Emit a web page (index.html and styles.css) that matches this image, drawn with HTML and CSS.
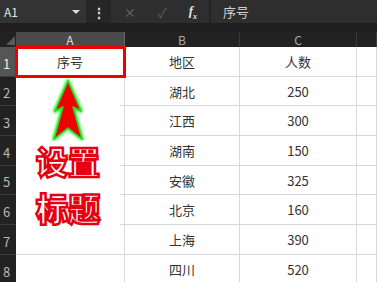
FILE: index.html
```html
<!DOCTYPE html>
<html lang="zh">

<head>
    <meta charset="UTF-8">
    <meta name="viewport" content="width=device-width, initial-scale=1.0">
    <title>设置标题</title>
    <link rel="stylesheet" href="styles.css">
</head>

<body>
    <div class="formula-bar">
        <div class="name-box">
            <span>A1</span>
            <span class="caret"></span>
        </div>
        <div class="dots">&#8942;</div>
        <div class="actions">
            <span class="icon cancel">&#10005;</span>
            <span class="icon confirm">&#10003;</span>
            <span class="icon fx">f<sub>x</sub></span>
        </div>
        <div class="formula">序号</div>
    </div>

    <div class="sheet">
        <div class="corner"><span class="tri"></span></div>
        <div class="col-head active">A</div>
        <div class="col-head">B</div>
        <div class="col-head">C</div>
        <div class="col-head"></div>

        <div class="row-head active">1</div>
        <div class="cell selected">序号</div>
        <div class="cell">地区</div>
        <div class="cell">人数</div>
        <div class="cell"></div>

        <div class="row-head">2</div>
        <div class="cell"></div>
        <div class="cell">湖北</div>
        <div class="cell">250</div>
        <div class="cell"></div>

        <div class="row-head">3</div>
        <div class="cell"></div>
        <div class="cell">江西</div>
        <div class="cell">300</div>
        <div class="cell"></div>

        <div class="row-head">4</div>
        <div class="cell"></div>
        <div class="cell">湖南</div>
        <div class="cell">150</div>
        <div class="cell"></div>

        <div class="row-head">5</div>
        <div class="cell"></div>
        <div class="cell">安徽</div>
        <div class="cell">325</div>
        <div class="cell"></div>

        <div class="row-head">6</div>
        <div class="cell"></div>
        <div class="cell">北京</div>
        <div class="cell">160</div>
        <div class="cell"></div>

        <div class="row-head">7</div>
        <div class="cell"></div>
        <div class="cell">上海</div>
        <div class="cell">390</div>
        <div class="cell"></div>

        <div class="row-head">8</div>
        <div class="cell"></div>
        <div class="cell">四川</div>
        <div class="cell">520</div>
        <div class="cell"></div>

        <div class="annotation">
            <svg class="arrow" width="104" height="64" viewBox="0 0 104 64">
                <defs>
                    <filter id="glow" x="-50%" y="-50%" width="200%" height="200%">
                        <feGaussianBlur stdDeviation="1.2" />
                    </filter>
                </defs>
                <path d="M52 4 L65 34 L57 30 L66 62 L52 51 L38 62 L47 30 L39 34 Z" fill="none" stroke="#3cf03c" stroke-width="4" stroke-linejoin="round" filter="url(#glow)" />
                <path d="M52 4 L65 34 L57 30 L66 62 L52 51 L38 62 L47 30 L39 34 Z" fill="#f00000" stroke="#27d827" stroke-width="1.5" stroke-linejoin="round" />
            </svg>
            <div class="note">设置<br>标题</div>
        </div>
    </div>
</body>

</html>
```

FILE: styles.css
```css
body {
    margin: 0;
    height: 100vh;
    overflow: hidden;
    background-color: #1f1f1f;
    font-family: "Noto Sans CJK SC", "Liberation Sans", sans-serif;
}

.formula-bar {
    display: flex;
    height: 23px;
    background-color: #2e2e2e;
    color: #e6e6e6;
    font-size: 12px;
}

.name-box {
    width: 86px;
    display: flex;
    align-items: center;
    justify-content: space-between;
    padding: 0 6px 0 4px;
    box-sizing: border-box;
    background-color: #333;
}

.caret {
    width: 0;
    height: 0;
    border-left: 4px solid transparent;
    border-right: 4px solid transparent;
    border-top: 4px solid #ddd;
}

.dots {
    width: 25px;
    display: flex;
    align-items: center;
    justify-content: center;
    background-color: #262626;
    font-size: 14px;
    font-weight: bold;
    color: #ddd;
}

.actions {
    width: 100px;
    display: flex;
    align-items: center;
    justify-content: space-between;
    padding: 0 12px 0 13px;
    box-sizing: border-box;
    border-right: 2px solid #222;
}

.icon {
    color: #5c5c5c;
    font-size: 14px;
}

.icon.fx {
    font-family: "Liberation Serif", serif;
    font-style: italic;
    font-weight: bold;
    color: #e6e6e6;
    font-size: 13px;
}

.icon.fx sub {
    font-size: 8px;
}

.formula {
    flex: 1;
    display: flex;
    align-items: center;
    padding-left: 12px;
    font-size: 13px;
    color: #d0d0d0;
}

.sheet {
    position: relative;
    margin-top: 9px;
    display: grid;
    grid-template-columns: 16px 109px 115px 117px 1fr;
    grid-template-rows: 15px repeat(8, 29.7px);
    background-color: #fff;
}

.corner {
    position: relative;
    background-color: #222;
}

.corner .tri {
    position: absolute;
    right: 1px;
    bottom: 2px;
    width: 0;
    height: 0;
    border-left: 9px solid transparent;
    border-bottom: 9px solid #5a5a5a;
}

.col-head {
    display: flex;
    align-items: center;
    justify-content: center;
    background-color: #222;
    color: #a8a8a8;
    font-size: 12px;
    border-right: 1px solid #3a3a3a;
}

.col-head.active {
    background-color: #4b4b4b;
    color: #ddd;
    border-right-color: #666;
}

.row-head {
    display: flex;
    align-items: flex-end;
    padding: 0 0 3px 3px;
    background-color: #222;
    color: #b8b8b8;
    font-size: 13px;
    border-bottom: 1px solid #3a3a3a;
}

.row-head.active {
    background-color: #555;
    color: #eee;
}

.cell {
    display: flex;
    align-items: center;
    justify-content: center;
    font-size: 13px;
    color: #333;
    border-right: 1px solid #d8d8d8;
    border-bottom: 1px solid #d8d8d8;
}

.cell.selected {
    outline: 3px solid #ec0000;
    outline-offset: -2px;
    z-index: 1;
}

.annotation {
    position: absolute;
    left: 16px;
    top: 45px;
    width: 104px;
    height: 148px;
    background-color: #fff;
    display: flex;
    flex-direction: column;
    align-items: center;
}

.arrow {
    display: block;
    flex: none;
}

.note {
    margin-top: -4px;
    font-size: 32px;
    font-weight: 900;
    line-height: 47px;
    color: #fff;
    -webkit-text-stroke: 2.5px #e60012;
}
```
